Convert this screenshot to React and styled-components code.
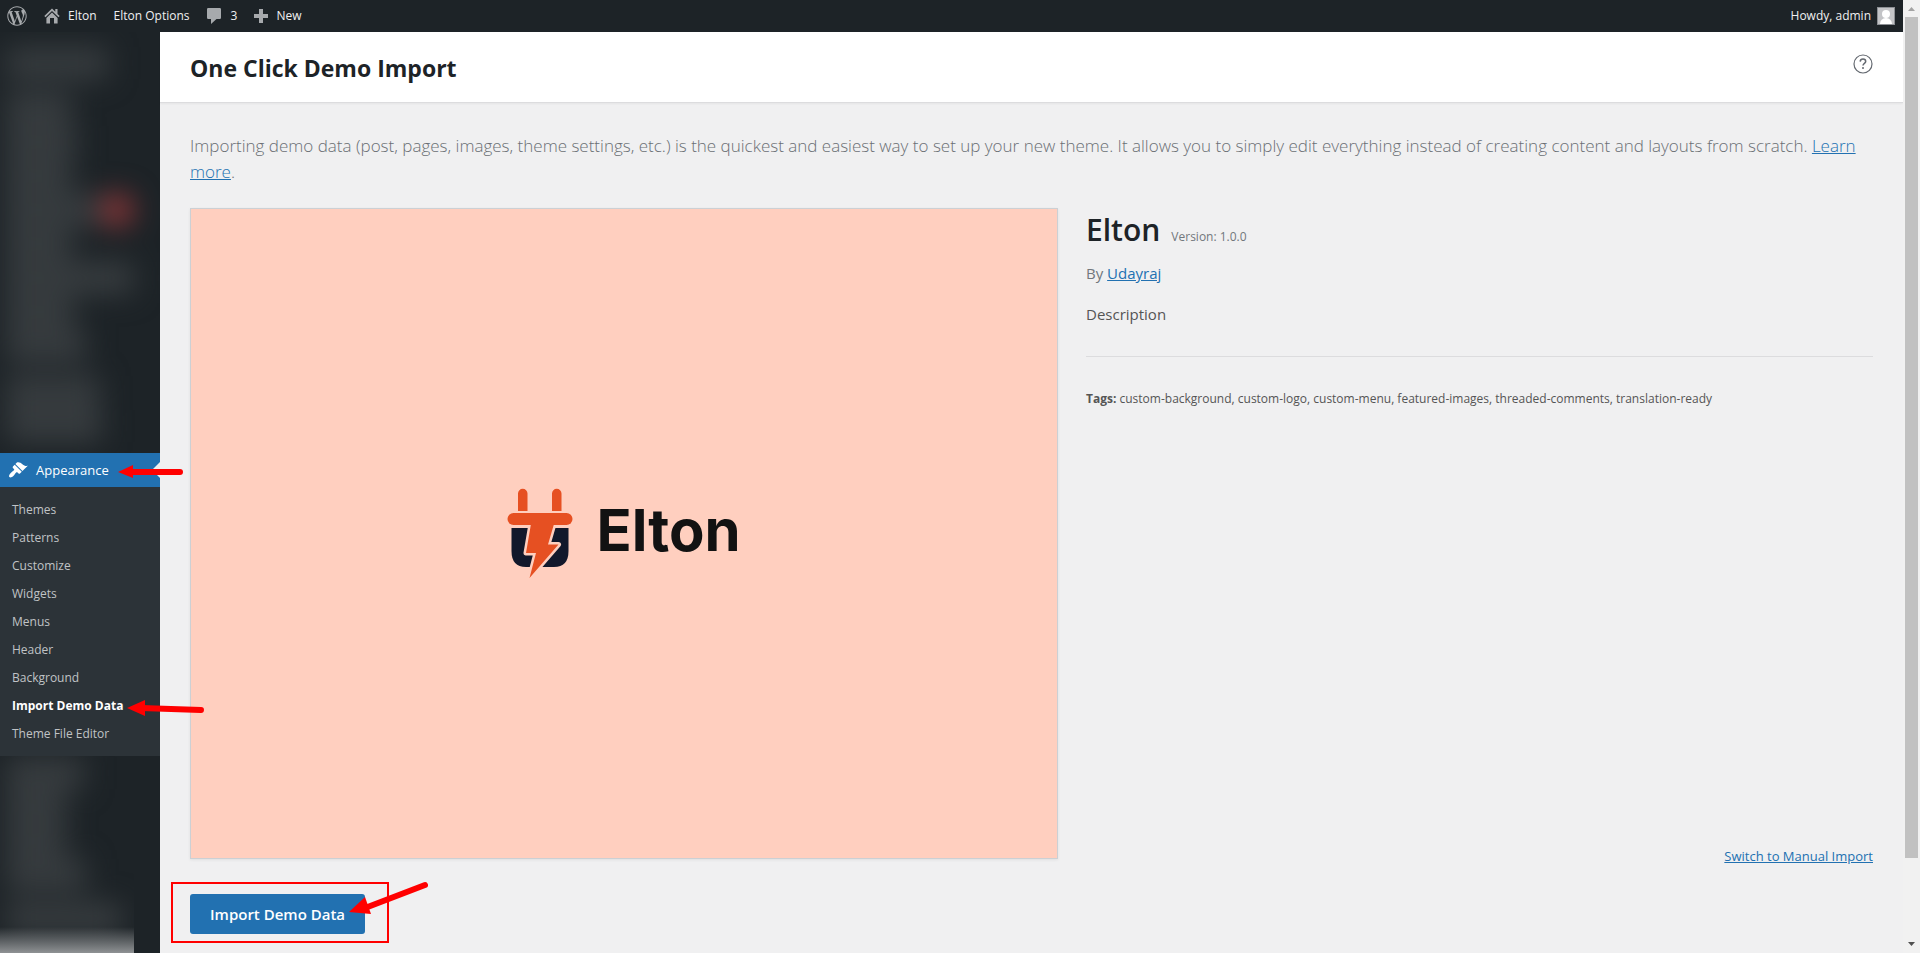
import React from "react";
import styled, { createGlobalStyle } from "styled-components";
import { FaWordpressSimple } from "react-icons/fa";

const GlobalStyle = createGlobalStyle`
  * {
    box-sizing: border-box;
  }
  body {
    margin: 0;
    background: #f0f0f1;
    color: #3c434a;
    font-family: "Open Sans", "Noto Sans", sans-serif;
    font-size: 12px;
    line-height: 20px;
  }
  a {
    color: #2271b1;
  }
`;

const Screen = styled.div`
  display: grid;
  grid-template-columns: 1fr 17px;
  height: 100vh;
  overflow: hidden;
`;
const Page = styled.div`
  display: flex;
  flex-direction: column;
  min-width: 0;
  min-height: 0;
`;
const AdminBar = styled.header`
  display: flex;
  justify-content: space-between;
  flex: none;
  height: 32px;
  padding: 0 8px 0 7px;
  background: #1d2327;
`;
const BarGroup = styled.nav`
  display: flex;
  align-items: center;
  gap: 17px;
`;
const BarLink = styled.a`
  display: flex;
  align-items: center;
  gap: ${(props) => props.$gap || 8}px;
  color: #f0f0f1;
  text-decoration: none;
  svg {
    display: block;
    color: #a7aaad;
  }
`;
const Body = styled.div`
  display: flex;
  flex: 1;
  min-height: 0;
`;

const Sidebar = styled.aside`
  display: flex;
  flex-direction: column;
  flex: none;
  width: 160px;
  background: #1d2327;
`;
const Smudge = styled.div`
  flex: none;
  overflow: hidden;
  height: 421px;
`;
const SmudgeFooter = styled.div`
  position: relative;
  flex: 1;
  overflow: hidden;
  width: 134px;
  min-height: 0;
  &::after {
    content: "";
    position: absolute;
    inset: auto 0 0;
    height: 26px;
    background: linear-gradient(rgba(146, 149, 151, 0), #8f9294);
  }
`;
const SmudgeRows = styled.div`
  display: flex;
  flex-direction: column;
  padding: ${(props) => props.$pad || "14px 0 0 6px"};
  filter: blur(14px);
`;
const SmudgeRow = styled.div`
  display: flex;
  align-items: center;
  height: ${(props) => props.$height || 34}px;
`;
const SmudgeText = styled.span`
  width: ${(props) => props.$width}px;
  height: 32px;
  background: #373c3f;
`;
const SmudgeBadge = styled.span`
  width: 34px;
  height: 34px;
  border-radius: 17px;
  background: #8a3537;
`;

const Current = styled.div`
  position: relative;
  flex: none;
  height: 34px;
  background: #2271b1;
  &::after {
    content: "";
    position: absolute;
    right: 0;
    top: 9px;
    border: 8px solid transparent;
    border-left-width: 0;
    border-right-color: #f0f0f1;
  }
`;
const CurrentLink = styled.a`
  display: flex;
  align-items: center;
  gap: 8px;
  height: 100%;
  padding-left: 8px;
  color: #fff;
  font-size: 13px;
  text-decoration: none;
`;
const SubMenu = styled.ul`
  flex: none;
  margin: 0;
  padding: 9px 0 8px;
  list-style: none;
  background: #2c3338;
`;
const SubItem = styled.li`
  position: relative;
  height: 28px;
  a {
    display: block;
    padding: 4px 12px;
    color: ${(props) => (props.$active ? "#fff" : "#c0c3c6")};
    font-weight: ${(props) => (props.$active ? 700 : 400)};
    text-decoration: none;
  }
`;
const Arrow = styled.svg`
  position: absolute;
  z-index: 2;
  left: ${(props) => props.$left}px;
  top: ${(props) => props.$top}px;
  overflow: visible;
`;

const Main = styled.main`
  flex: 1;
  min-width: 0;
`;
const TitleBar = styled.div`
  display: flex;
  justify-content: space-between;
  align-items: flex-start;
  height: 71px;
  padding: 20px 30px 0;
  background: #fff;
  border-bottom: 1px solid #dcdcde;
  box-shadow: 0 1px 2px rgba(0, 0, 0, 0.05);
`;
const Title = styled.h1`
  margin: 0;
  color: #1d2327;
  font-size: 23px;
  font-weight: 700;
  line-height: 32px;
`;
const HelpLink = styled.a`
  display: block;
  padding-top: 2px;
  color: #646970;
  svg {
    display: block;
  }
`;
const Content = styled.div`
  padding: 30px 30px 0;
`;
const Intro = styled.p`
  margin: 0 0 23px;
  color: #6a6f74;
  font-size: 17px;
  font-weight: 300;
  line-height: 26px;
`;
const Columns = styled.div`
  display: grid;
  grid-template-columns: 868fr 787fr;
  gap: 28px;
`;
const Shot = styled.div`
  display: flex;
  justify-content: center;
  align-items: center;
  gap: 23px;
  aspect-ratio: 4 / 3;
  border: 1px solid #ccd0d4;
  background: #ffcfbf;
  box-shadow: 0 1px 3px rgba(0, 0, 0, 0.07);
`;
const Wordmark = styled.span`
  padding-bottom: 8px;
  color: #121212;
  font-family: Inter, sans-serif;
  font-size: 58px;
  font-weight: 700;
  line-height: 72px;
`;
const Info = styled.div`
  display: flex;
  flex-direction: column;
`;
const ThemeName = styled.h2`
  display: flex;
  align-items: baseline;
  gap: 11px;
  margin: 0;
  color: #1d2327;
  font-size: 30px;
  font-weight: 600;
  line-height: 44px;
`;
const Version = styled.span`
  color: #72777c;
  font-size: 12px;
  font-weight: 400;
`;
const Author = styled.p`
  margin: 2px 0 0;
  color: #72777c;
  font-size: 15px;
  line-height: 24px;
`;
const Description = styled.p`
  margin: 17px 0 0;
  padding-bottom: 30px;
  border-bottom: 1px solid #dcdcde;
  color: #555;
  font-size: 15px;
  line-height: 24px;
`;
const Tags = styled.p`
  margin: 32px 0 0;
  color: #555;
`;
const Manual = styled.a`
  align-self: flex-end;
  margin-top: auto;
  margin-bottom: -7px;
  font-size: 13px;
`;
const Actions = styled.div`
  position: relative;
  display: inline-block;
  margin: 23px 0 0 -19px;
  padding: 10px 22px 7px 17px;
  border: 2px solid #f00;
`;
const ImportButton = styled.button`
  display: block;
  height: 40px;
  padding: 0 20px;
  border: 0;
  border-radius: 3px;
  background: #2271b1;
  color: #fff;
  font-family: inherit;
  font-size: 15px;
  font-weight: 600;
`;

const ScrollBar = styled.div`
  display: flex;
  flex-direction: column;
  align-items: center;
  padding: 7px 0;
  background: #f1f1f1;
`;
const ScrollThumb = styled.div`
  flex: 841;
  width: 13px;
  margin-top: 6px;
  background: #c1c1c1;
`;
const ScrollTrack = styled.div`
  flex: 84;
`;

const HomeIcon = () => (
  <svg width="16" height="16" viewBox="0 0 16 16" fill="currentColor">
    <path d="M8 0.5 0.3 8.1 1.5 9.3 8 2.9 14.5 9.3 15.7 8.1 13.5 5.9V1H11.3V3.7Z" />
    <path d="M2.4 10 8 4.5 13.6 10V15.5H10V10H6V15.5H2.4Z" />
  </svg>
);
const CommentIcon = () => (
  <svg width="14" height="16" viewBox="0 0 14 16" fill="currentColor">
    <path d="M1.2 0H12.8Q14 0 14 1.2V9.8Q14 11 12.8 11H9.5L4 16V11H1.2Q0 11 0 9.8V1.2Q0 0 1.2 0Z" />
  </svg>
);
const PlusIcon = () => (
  <svg width="14" height="14" viewBox="0 0 14 14" fill="currentColor">
    <path d="M5 0H9V5H14V9H9V14H5V9H0V5H5Z" />
  </svg>
);
const AvatarIcon = () => (
  <svg width="18" height="18" viewBox="0 0 18 18">
    <path d="M0 0H18V18H0Z" fill="#8c8f94" />
    <path d="M1 1H17V17H1Z" fill="#c3c4c7" />
    <circle cx="9" cy="7" r="4" fill="#fff" />
    <path d="M3 17Q3.4 11.5 9 11Q14.6 11.5 15 17Z" fill="#fff" />
  </svg>
);
const BrushIcon = () => (
  <svg width="20" height="20" viewBox="0 0 20 20" fill="currentColor">
    <path d="M14.48 11.06 7.41 3.99l1.5-1.5c.5-.56 2.3-.47 3.51.32 1.21.8 1.43 1.28 2.91 2.1 1.18.64 2.45 1.26 4.45.85zm-.71.71L6.7 4.7 4.93 6.47c-.39.39-.39 1.02 0 1.41l1.06 1.06c.39.39.39 1.03 0 1.42-.6.6-1.43 1.11-2.21 1.69-.35.26-.7.53-1.01.84C1.43 14.23.4 16.08 1.4 17.07c.99 1 2.84-.03 4.18-1.36.31-.31.58-.66.85-1.02.57-.78 1.08-1.61 1.69-2.21.39-.39 1.02-.39 1.41 0l1.06 1.06c.39.39 1.02.39 1.41 0z" />
  </svg>
);
const HelpIcon = () => (
  <svg width="20" height="20" viewBox="0 0 20 20" fill="none" stroke="currentColor">
    <circle cx="10" cy="10" r="9" strokeWidth="1.2" />
    <path d="M7.2 7.6C7.3 5.9 8.4 5.1 10 5.1S12.7 6 12.7 7.5C12.7 9.3 10 9.5 10 11.6" strokeWidth="1.5" />
    <circle cx="10" cy="14" r="0.6" fill="currentColor" />
  </svg>
);
const PlugLogo = () => (
  <svg width="66" height="92" viewBox="0 0 66 92">
    <path d="M11 23V5.5a4.75 4.75 0 0 1 9.5 0V23ZM45 23V5.5a4.75 4.75 0 0 1 9.5 0V23Z" fill="#e65022" />
    <path d="M4.5 40H61.5V63Q61.5 79 47 79H19Q4.5 79 4.5 63Z" fill="#12182b" />
    <path
      d="M25 30 19 65H29L22.5 90 51.5 56.5H41L47 36V30Z"
      fill="#e65022"
      stroke="#ffcfbf"
      strokeWidth="5"
      strokeLinejoin="round"
    />
    <rect x="0" y="25" width="66" height="15" fill="#ffcfbf" />
    <rect x="0.5" y="25" width="65" height="12" rx="6" fill="#e65022" />
    <path d="M25 30 19 65H29L22.5 90 51.5 56.5H41L47 36V30Z" fill="#e65022" />
  </svg>
);

const subItems = [
  "Themes",
  "Patterns",
  "Customize",
  "Widgets",
  "Menus",
  "Header",
  "Background",
  "Import Demo Data",
  "Theme File Editor",
];

const AdminMenu = () => (
  <Sidebar>
    <Smudge aria-hidden="true">
      <SmudgeRows>
        <SmudgeRow>
          <SmudgeText $width={102} />
        </SmudgeRow>
        <SmudgeRow $height={11} />
        <SmudgeRow>
          <SmudgeText $width={66} />
        </SmudgeRow>
        <SmudgeRow>
          <SmudgeText $width={70} />
        </SmudgeRow>
        <SmudgeRow>
          <SmudgeText $width={66} />
        </SmudgeRow>
        <SmudgeRow>
          <SmudgeText $width={94} />
          <SmudgeBadge />
        </SmudgeRow>
        <SmudgeRow>
          <SmudgeText $width={66} />
        </SmudgeRow>
        <SmudgeRow>
          <SmudgeText $width={128} />
        </SmudgeRow>
        <SmudgeRow>
          <SmudgeText $width={68} />
        </SmudgeRow>
        <SmudgeRow>
          <SmudgeText $width={80} />
        </SmudgeRow>
        <SmudgeRow $height={12} />
        <SmudgeRow>
          <SmudgeText $width={94} />
        </SmudgeRow>
        <SmudgeRow>
          <SmudgeText $width={96} />
        </SmudgeRow>
      </SmudgeRows>
    </Smudge>
    <Current>
      <CurrentLink href="#appearance">
        <BrushIcon />
        Appearance
      </CurrentLink>
      <Arrow $left={118} $top={11} width="66" height="14">
        <path d="M12 8H62" stroke="#f00" strokeWidth="6" strokeLinecap="round" />
        <path d="M0 8 15 1V14Z" fill="#f00" />
      </Arrow>
    </Current>
    <SubMenu>
      {subItems.map((item) => (
        <SubItem key={item} $active={item === "Import Demo Data"}>
          <a href="#submenu">{item}</a>
          {item === "Import Demo Data" && (
            <Arrow $left={127} $top={9} width="78" height="16">
              <path d="M14 7 74 9" stroke="#f00" strokeWidth="6" strokeLinecap="round" />
              <path d="M0 7 18-1V15Z" fill="#f00" />
            </Arrow>
          )}
        </SubItem>
      ))}
    </SubMenu>
    <SmudgeFooter aria-hidden="true">
      <SmudgeRows $pad="0 0 0 6px">
        <SmudgeRow>
          <SmudgeText $width={78} />
        </SmudgeRow>
        <SmudgeRow>
          <SmudgeText $width={60} />
        </SmudgeRow>
        <SmudgeRow>
          <SmudgeText $width={60} />
        </SmudgeRow>
        <SmudgeRow>
          <SmudgeText $width={80} />
        </SmudgeRow>
        <SmudgeRow $height={10} />
        <SmudgeRow>
          <SmudgeText $width={116} />
        </SmudgeRow>
      </SmudgeRows>
    </SmudgeFooter>
  </Sidebar>
);

const App = () => (
  <>
    <GlobalStyle />
    <Screen>
      <Page>
        <AdminBar>
          <BarGroup aria-label="Toolbar">
            <BarLink href="#wordpress" aria-label="WordPress">
              <FaWordpressSimple size={20} />
            </BarLink>
            <BarLink href="#site">
              <HomeIcon />
              Elton
            </BarLink>
            <BarLink href="#options">Elton Options</BarLink>
            <BarLink href="#comments" $gap={10}>
              <CommentIcon />3
            </BarLink>
            <BarLink href="#new">
              <PlusIcon />
              New
            </BarLink>
          </BarGroup>
          <BarLink href="#profile" $gap={6}>
            Howdy, admin
            <AvatarIcon />
          </BarLink>
        </AdminBar>
        <Body>
          <AdminMenu />
          <Main>
            <TitleBar>
              <Title>One Click Demo Import</Title>
              <HelpLink href="#help" aria-label="Help">
                <HelpIcon />
              </HelpLink>
            </TitleBar>
            <Content>
              <Intro>
                Importing demo data (post, pages, images, theme settings, etc.) is the quickest and
                easiest way to set up your new theme. It allows you to simply edit everything
                instead of creating content and layouts from scratch. <a href="#learn">Learn more</a>.
              </Intro>
              <Columns>
                <Shot>
                  <PlugLogo />
                  <Wordmark>Elton</Wordmark>
                </Shot>
                <Info>
                  <ThemeName>
                    Elton <Version>Version: 1.0.0</Version>
                  </ThemeName>
                  <Author>
                    By <a href="#author">Udayraj</a>
                  </Author>
                  <Description>Description</Description>
                  <Tags>
                    <strong>Tags:</strong> custom-background, custom-logo, custom-menu,
                    featured-images, threaded-comments, translation-ready
                  </Tags>
                  <Manual href="#manual">Switch to Manual Import</Manual>
                </Info>
              </Columns>
              <Actions>
                <ImportButton type="button">Import Demo Data</ImportButton>
                <Arrow $left={176} $top={-2} width="80" height="34">
                  <path d="M16 26 76 3" stroke="#f00" strokeWidth="6" strokeLinecap="round" />
                  <path d="M0 30 16 15 22 32Z" fill="#f00" />
                </Arrow>
              </Actions>
            </Content>
          </Main>
        </Body>
      </Page>
      <ScrollBar aria-hidden="true">
        <svg width="7" height="4" viewBox="0 0 7 4">
          <path d="M0 4 3.5 0 7 4Z" fill="#a3a3a3" />
        </svg>
        <ScrollThumb />
        <ScrollTrack />
        <svg width="7" height="4" viewBox="0 0 7 4">
          <path d="M0 0 3.5 4 7 0Z" fill="#505050" />
        </svg>
      </ScrollBar>
    </Screen>
  </>
);

export default App;
